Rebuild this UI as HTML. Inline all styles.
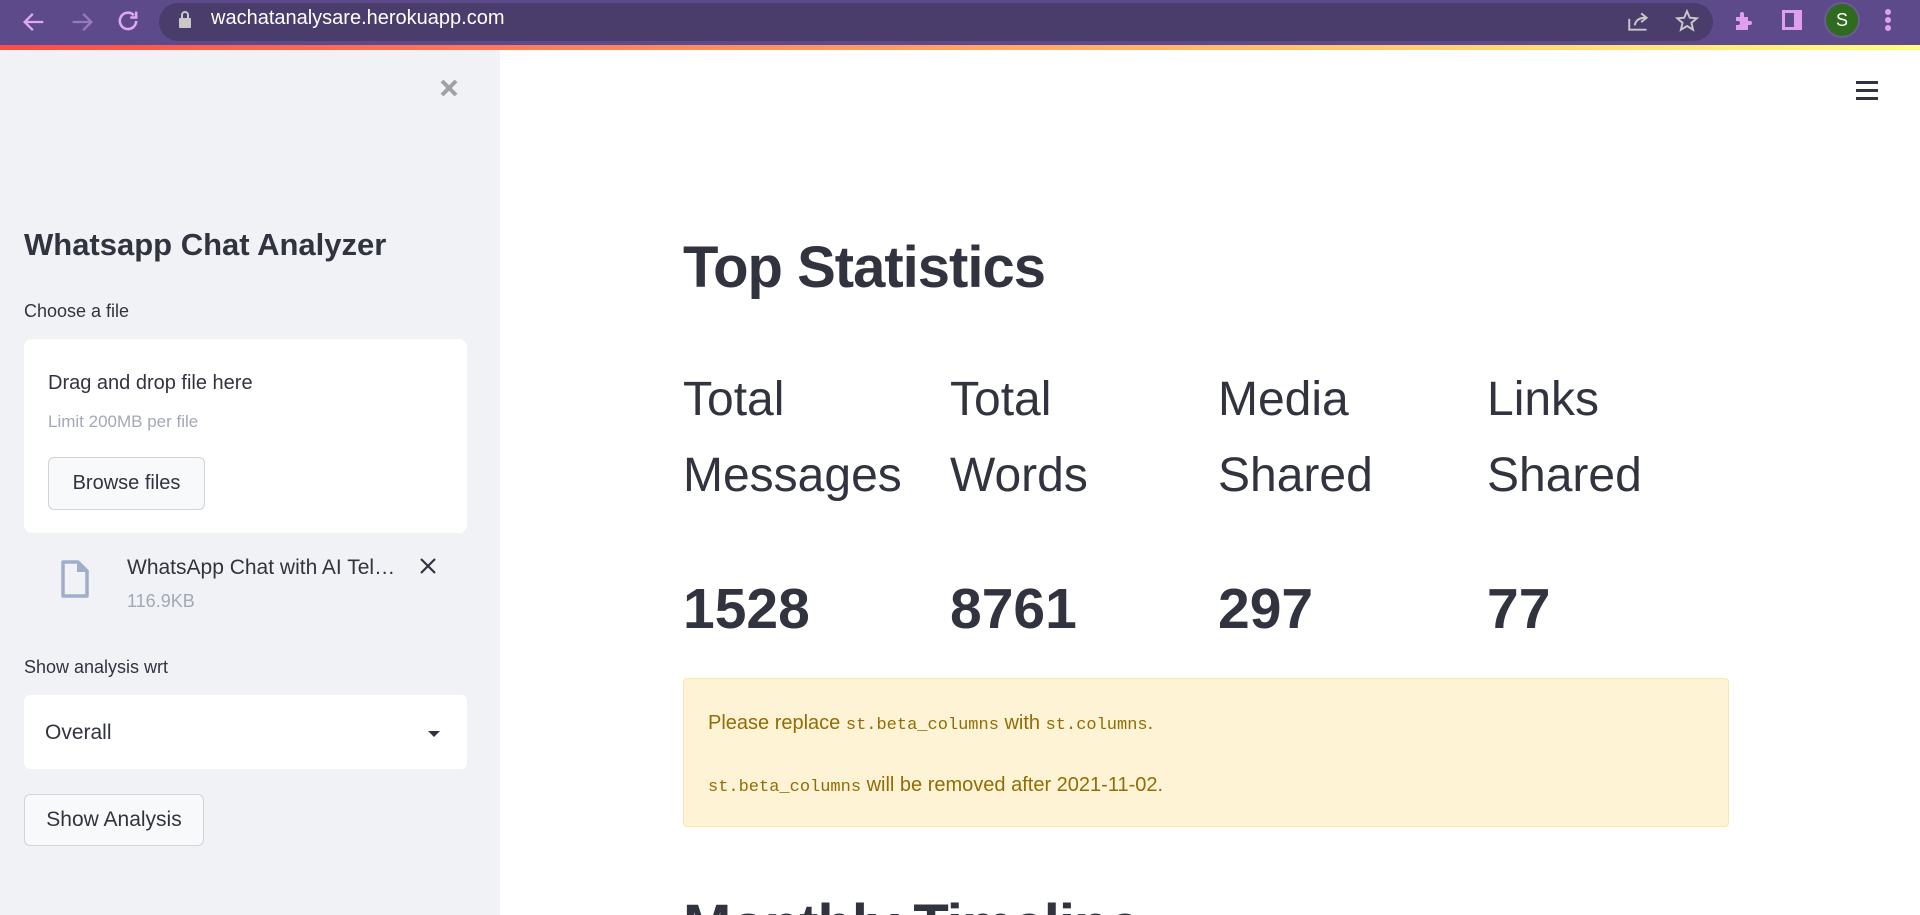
<!DOCTYPE html>
<html style="width:1920px;height:915px;overflow:hidden"><head><meta charset="utf-8"><style>
*{margin:0;padding:0;box-sizing:border-box}
body{width:1920px;height:915px;overflow:hidden;background:#fff;font-family:"Liberation Sans",sans-serif;color:#31333f;position:relative}
.a{position:absolute;white-space:nowrap;line-height:1.15}
.btn{position:absolute;background:#f8f9fb;border:1px solid #d3d4d8;border-radius:6px;font-size:20px;display:flex;align-items:center;justify-content:center;color:#31333f}
</style></head><body>
<div style="position:absolute;left:0;top:0;width:1920px;height:915px;overflow:hidden">
<div class="a" style="left:0;top:0;width:1920px;height:45px;background:#5d4a8a"></div>
<div class="a" style="left:159px;top:3px;width:1554px;height:38px;background:#4a3d6b;border-radius:19px"></div>
<svg class="a" style="left:20px;top:8px" width="28" height="28" viewBox="0 0 24 24"><path d="M20 12H5M11 5l-7 7 7 7" stroke="#e0a8f0" stroke-width="2" fill="none"/></svg>
<svg class="a" style="left:68px;top:8px" width="28" height="28" viewBox="0 0 24 24"><path d="M4 12h15M13 5l7 7-7 7" stroke="#9a78c0" stroke-width="2" fill="none"/></svg>
<svg class="a" style="left:114px;top:7px" width="28" height="28" viewBox="0 0 24 24"><path d="M19 12a7 7 0 1 1-2-5M19 4v5h-5" stroke="#e0a8f0" stroke-width="2.2" fill="none"/></svg>
<svg class="a" style="left:178px;top:10px" width="14" height="20" viewBox="0 0 14 20"><rect x="1" y="8" width="12" height="10" rx="1" fill="#c8c8c8"/><path d="M4 8V5a3 3 0 0 1 6 0v3" stroke="#c8c8c8" stroke-width="2" fill="none"/></svg>
<div class="a" style="left:211px;top:7px;font-size:20px;color:#fff">wachatanalysare.herokuapp.com</div>
<svg class="a" style="left:1626px;top:8px" width="26" height="26" viewBox="0 0 24 24"><path d="M3 10v10h16M8 16c1-5 5-7 10-7M14 5l5 4-5 4" stroke="#c8c8c8" stroke-width="1.8" fill="none"/></svg>
<svg class="a" style="left:1674px;top:8px" width="26" height="26" viewBox="0 0 24 24"><path d="M12 3l2.6 6 6.4.5-4.9 4.2 1.5 6.3L12 16.6 6.4 20l1.5-6.3L3 9.5 9.4 9z" stroke="#c8c8c8" stroke-width="1.8" fill="none"/></svg>
<svg class="a" style="left:1732px;top:9px" width="24" height="24" viewBox="0 0 24 24"><path d="M4 8h4V5a2 2 0 0 1 4 0v3h4v4h2a2 2 0 0 1 0 4h-2v5H4v-5h2a2 2 0 0 0 0-4H4z" fill="#e09ef0"/></svg>
<div class="a" style="left:1782px;top:10px;width:20px;height:20px;border:3px solid #e09ef0;border-right-width:8px"></div>
<div class="a" style="left:1824px;top:2px;width:36px;height:36px;border-radius:50%;background:#6b5a94"></div>
<div class="a" style="left:1826px;top:4px;width:32px;height:32px;border-radius:50%;background:#2e6b1f;color:#fff;font-size:18px;text-align:center;line-height:32px">S</div>
<div class="a" style="left:1885px;top:9px;width:6px;height:6px;border-radius:50%;background:#e09ef0;box-shadow:0 8px 0 #e09ef0,0 16px 0 #e09ef0"></div>
<div class="a" style="left:0;top:45px;width:1920px;height:5px;background:linear-gradient(90deg,#ff4b4b,#fffd80)"></div>

<div class="a" style="left:0;top:50px;width:500px;height:865px;background:#f0f2f6"></div>
<svg class="a" style="left:439px;top:78px" width="20" height="20" viewBox="0 0 20 20"><path d="M3 3l14 14M17 3L3 17" stroke="#a0a0a6" stroke-width="4"/></svg>
<div class="a" style="left:24px;top:227px;font-size:31px;font-weight:bold">Whatsapp Chat Analyzer</div>
<div class="a" style="left:24px;top:301px;font-size:18px">Choose a file</div>
<div class="a" style="left:24px;top:339px;width:443px;height:194px;background:#fff;border-radius:8px"></div>
<div class="a" style="left:48px;top:372px;font-size:20px">Drag and drop file here</div>
<div class="a" style="left:48px;top:412px;font-size:17px;color:#a3a8b8">Limit 200MB per file</div>
<div class="btn" style="left:48px;top:457px;width:157px;height:53px">Browse files</div>
<svg class="a" style="left:60px;top:560px" width="30" height="38" viewBox="0 0 30 38"><path d="M3 2h15l9 9v25H3z" stroke="#a0aecb" stroke-width="3.5" fill="none" stroke-linejoin="round"/><path d="M17 2v10h10" fill="#a0aecb"/></svg>
<div class="a" style="left:127px;top:556px;font-size:21px">WhatsApp Chat with AI Tel…</div>
<div class="a" style="left:127px;top:591px;font-size:18px;color:#a3a8b8">116.9KB</div>
<svg class="a" style="left:419px;top:557px" width="18" height="18" viewBox="0 0 18 18"><path d="M2 2l14 14M16 2L2 16" stroke="#31333f" stroke-width="2.2"/></svg>
<div class="a" style="left:24px;top:657px;font-size:18px">Show analysis wrt</div>
<div class="a" style="left:24px;top:695px;width:443px;height:74px;background:#fff;border-radius:6px"></div>
<div class="a" style="left:45px;top:721px;font-size:21px">Overall</div>
<div class="a" style="left:428px;top:731px;width:0;height:0;border-left:6px solid transparent;border-right:6px solid transparent;border-top:6px solid #31333f"></div>
<div class="btn" style="left:24px;top:794px;width:180px;height:52px;font-size:21px">Show Analysis</div>

<div class="a" style="left:1856px;top:81px;width:22px;height:3px;background:#31333f;box-shadow:0 8px 0 #31333f,0 16px 0 #31333f"></div>
<div class="a" style="left:683px;top:235px;font-size:58px;font-weight:bold;letter-spacing:-1px">Top Statistics</div>
<div class="a" style="left:683px;top:362px;font-size:48px;line-height:76px">Total<br>Messages</div>
<div class="a" style="left:950px;top:362px;font-size:48px;line-height:76px">Total<br>Words</div>
<div class="a" style="left:1218px;top:362px;font-size:48px;line-height:76px">Media<br>Shared</div>
<div class="a" style="left:1487px;top:362px;font-size:48px;line-height:76px">Links<br>Shared</div>
<div class="a" style="left:683px;top:577px;font-size:57px;font-weight:bold">1528</div>
<div class="a" style="left:950px;top:577px;font-size:57px;font-weight:bold">8761</div>
<div class="a" style="left:1218px;top:577px;font-size:57px;font-weight:bold">297</div>
<div class="a" style="left:1487px;top:577px;font-size:57px;font-weight:bold">77</div>
<div class="a" style="left:683px;top:678px;width:1046px;height:149px;background:#fef3d5;border:1px solid #f8e8b0;border-radius:4px"></div>
<div class="a" style="left:708px;top:712px;font-size:20px;color:#926c05">Please replace <span style="font-family:'Liberation Mono',monospace;font-size:17px">st.beta_columns</span> with <span style="font-family:'Liberation Mono',monospace;font-size:17px">st.columns</span>.</div>
<div class="a" style="left:708px;top:774px;font-size:20px;color:#926c05"><span style="font-family:'Liberation Mono',monospace;font-size:17px">st.beta_columns</span> will be removed after 2021-11-02.</div>
<div class="a" style="left:683px;top:893px;font-size:58px;font-weight:bold;letter-spacing:-1px">Monthly Timeline</div>
</div>
</body></html>
